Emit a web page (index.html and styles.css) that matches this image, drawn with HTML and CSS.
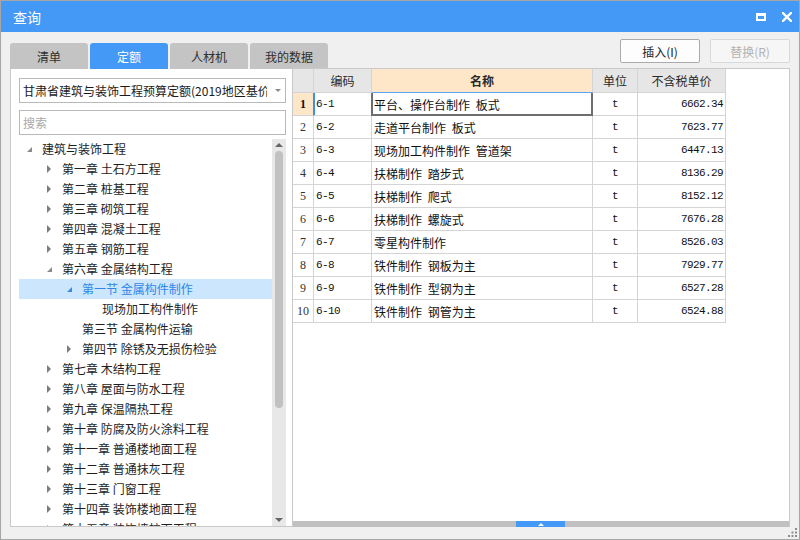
FILE: index.html
```html
<!DOCTYPE html>
<html lang="zh-CN">
<head>
<meta charset="utf-8">
<title>查询</title>
<link rel="stylesheet" href="styles.css">
</head>
<body>
<div class="window">
  <div class="titlebar">
    <span class="title">查询</span>
    <div class="win-ctrls">
      <svg class="ico" width="10" height="10" viewBox="0 0 10 10"><path d="M0 1h10v8H0z M2 4h6v3H2z" fill="#fff" fill-rule="evenodd"/></svg>
      <svg class="ico" width="10" height="10" viewBox="0 0 10 10"><path d="M1 1L9 9M9 1L1 9" stroke="#fff" stroke-width="2.3" stroke-linecap="square"/></svg>
    </div>
  </div>
  <div class="content">
    <div class="toprow">
      <div class="tabs">
        <div class="tab">清单</div>
        <div class="tab active">定额</div>
        <div class="tab">人材机</div>
        <div class="tab">我的数据</div>
      </div>
      <div class="actions">
        <button class="btn">插入(I)</button>
        <button class="btn disabled">替换(R)</button>
      </div>
    </div>
    <div class="main">
      <div class="left">
        <div class="select">
          <span class="select-text">甘肃省建筑与装饰工程预算定额(2019地区基价)</span>
          <span class="caret-box"><span class="caret"></span></span>
        </div>
        <div class="search">搜索</div>
        <div class="tree-wrap">
          <ul class="tree">
            <li class="node l0"><span class="tog open"></span><span class="label">建筑与装饰工程</span></li>
            <li class="node l1"><span class="tog closed"></span><span class="label">第一章 土石方工程</span></li>
            <li class="node l1"><span class="tog closed"></span><span class="label">第二章 桩基工程</span></li>
            <li class="node l1"><span class="tog closed"></span><span class="label">第三章 砌筑工程</span></li>
            <li class="node l1"><span class="tog closed"></span><span class="label">第四章 混凝土工程</span></li>
            <li class="node l1"><span class="tog closed"></span><span class="label">第五章 钢筋工程</span></li>
            <li class="node l1"><span class="tog open"></span><span class="label">第六章 金属结构工程</span></li>
            <li class="node l2 selected"><span class="tog open"></span><span class="label">第一节 金属构件制作</span></li>
            <li class="node l3"><span class="tog"></span><span class="label">现场加工构件制作</span></li>
            <li class="node l2"><span class="tog"></span><span class="label">第三节 金属构件运输</span></li>
            <li class="node l2"><span class="tog closed"></span><span class="label">第四节 除锈及无损伤检验</span></li>
            <li class="node l1"><span class="tog closed"></span><span class="label">第七章 木结构工程</span></li>
            <li class="node l1"><span class="tog closed"></span><span class="label">第八章 屋面与防水工程</span></li>
            <li class="node l1"><span class="tog closed"></span><span class="label">第九章 保温隔热工程</span></li>
            <li class="node l1"><span class="tog closed"></span><span class="label">第十章 防腐及防火涂料工程</span></li>
            <li class="node l1"><span class="tog closed"></span><span class="label">第十一章 普通楼地面工程</span></li>
            <li class="node l1"><span class="tog closed"></span><span class="label">第十二章 普通抹灰工程</span></li>
            <li class="node l1"><span class="tog closed"></span><span class="label">第十三章 门窗工程</span></li>
            <li class="node l1"><span class="tog closed"></span><span class="label">第十四章 装饰楼地面工程</span></li>
            <li class="node l1"><span class="tog closed"></span><span class="label">第十五章 装饰墙柱面工程</span></li>
          </ul>
          <div class="vscroll">
            <div class="arr-box"><span class="arr-up"></span></div>
            <div class="vthumb"></div>
            <div class="vspace"></div>
            <div class="arr-box"><span class="arr-down"></span></div>
          </div>
        </div>
      </div>
      <div class="gridpanel">
        <div class="grid-area">
          <div class="grow head">
            <div class="c num"></div>
            <div class="c">编码</div>
            <div class="c name-h">名称</div>
            <div class="c">单位</div>
            <div class="c">不含税单价</div>
          </div>
          <div class="grow cur">
            <div class="c num">1</div>
            <div class="c code">6-1</div>
            <div class="c name">平台、操作台制作 板式</div>
            <div class="c unit">t</div>
            <div class="c price">6662.34</div>
          </div>
          <div class="grow">
            <div class="c num">2</div>
            <div class="c code">6-2</div>
            <div class="c name">走道平台制作 板式</div>
            <div class="c unit">t</div>
            <div class="c price">7623.77</div>
          </div>
          <div class="grow">
            <div class="c num">3</div>
            <div class="c code">6-3</div>
            <div class="c name">现场加工构件制作 管道架</div>
            <div class="c unit">t</div>
            <div class="c price">6447.13</div>
          </div>
          <div class="grow">
            <div class="c num">4</div>
            <div class="c code">6-4</div>
            <div class="c name">扶梯制作 踏步式</div>
            <div class="c unit">t</div>
            <div class="c price">8136.29</div>
          </div>
          <div class="grow">
            <div class="c num">5</div>
            <div class="c code">6-5</div>
            <div class="c name">扶梯制作 爬式</div>
            <div class="c unit">t</div>
            <div class="c price">8152.12</div>
          </div>
          <div class="grow">
            <div class="c num">6</div>
            <div class="c code">6-6</div>
            <div class="c name">扶梯制作 螺旋式</div>
            <div class="c unit">t</div>
            <div class="c price">7676.28</div>
          </div>
          <div class="grow">
            <div class="c num">7</div>
            <div class="c code">6-7</div>
            <div class="c name">零星构件制作</div>
            <div class="c unit">t</div>
            <div class="c price">8526.03</div>
          </div>
          <div class="grow">
            <div class="c num">8</div>
            <div class="c code">6-8</div>
            <div class="c name">铁件制作 钢板为主</div>
            <div class="c unit">t</div>
            <div class="c price">7929.77</div>
          </div>
          <div class="grow">
            <div class="c num">9</div>
            <div class="c code">6-9</div>
            <div class="c name">铁件制作 型钢为主</div>
            <div class="c unit">t</div>
            <div class="c price">6527.28</div>
          </div>
          <div class="grow">
            <div class="c num">10</div>
            <div class="c code">6-10</div>
            <div class="c name">铁件制作 钢管为主</div>
            <div class="c unit">t</div>
            <div class="c price">6524.88</div>
          </div>
        </div>
        <div class="hscroll"><div class="hthumb"><span class="hthumb-arr"></span></div></div>
      </div>
    </div>
  </div>
  <svg class="grip" width="10" height="10" viewBox="0 0 10 10">
    <rect x="7" y="0" width="2" height="2" fill="#8e8e8e"/>
    <rect x="3.5" y="3.5" width="2" height="2" fill="#8e8e8e"/>
    <rect x="7" y="3.5" width="2" height="2" fill="#8e8e8e"/>
    <rect x="0" y="7" width="2" height="2" fill="#8e8e8e"/>
    <rect x="3.5" y="7" width="2" height="2" fill="#8e8e8e"/>
    <rect x="7" y="7" width="2" height="2" fill="#8e8e8e"/>
  </svg>
</div>
</body>
</html>
```

FILE: styles.css
```css
* { box-sizing: border-box; }
html, body { margin: 0; padding: 0; }
body {
  width: 800px;
  height: 540px;
  overflow: hidden;
  font-family: "Noto Sans CJK SC", "Liberation Sans", sans-serif;
  font-size: 12px;
  color: #1e1e1e;
}
.window {
  position: relative;
  width: 800px;
  height: 540px;
  border: 1px solid #a6a6a6;
  background: #f0f0f0;
  display: flex;
  flex-direction: column;
}
.titlebar {
  height: 31px;
  flex: none;
  background: #4499f6;
  color: #fff;
  display: flex;
  align-items: center;
  justify-content: space-between;
  padding-left: 12px;
}
.title { font-size: 14px; line-height: 1; }
.win-ctrls {
  display: flex;
  align-items: center;
  gap: 16px;
  padding-right: 7px;
}
.ico { display: block; }

.content {
  flex: 1;
  min-height: 0;
  display: flex;
  flex-direction: column;
  padding: 0 9px 12px 9px;
}
.toprow {
  height: 37px;
  flex: none;
  display: flex;
  justify-content: space-between;
}
.tabs {
  align-self: flex-end;
  display: flex;
  gap: 2px;
}
.tab {
  width: 78px;
  height: 26px;
  background: #c4c4c4;
  border-radius: 3px 3px 0 0;
  display: flex;
  align-items: center;
  justify-content: center;
  color: #2e2e2e;
  font-size: 12px;
}
.tab.active { background: #4499f6; color: #fff; }
.actions {
  margin-top: 7px;
  display: flex;
  gap: 10px;
}
.btn {
  width: 80px;
  height: 24px;
  padding: 0;
  background: #fdfdfd;
  border: 1px solid #ababab;
  border-radius: 2px;
  font-family: "Noto Sans CJK SC", "Liberation Sans", sans-serif;
  font-size: 12px;
  color: #222;
}
.btn.disabled {
  background: #f6f6f6;
  border-color: #d9d9d9;
  color: #b2b2b2;
}

.main {
  flex: 1;
  min-height: 0;
  display: flex;
}
.left {
  width: 282px;
  flex: none;
  background: #fff;
  border-left: 1px solid #c9c9c9;
  border-bottom: 1px solid #c9c9c9;
  padding: 9px 6px 0 8px;
  display: flex;
  flex-direction: column;
}
.select {
  height: 25px;
  flex: none;
  border: 1px solid #b9b9b9;
  background: #fff;
  display: flex;
  align-items: center;
  padding-left: 3px;
}
.select-text {
  flex: 1;
  min-width: 0;
  overflow: hidden;
  white-space: nowrap;
  color: #1a1a1a;
}
.caret-box {
  width: 18px;
  flex: none;
  display: flex;
  padding-left: 8px;
}
.caret {
  width: 0;
  height: 0;
  border-left: 3px solid transparent;
  border-right: 3px solid transparent;
  border-top: 3px solid #8a8a8a;
}
.search {
  height: 25px;
  flex: none;
  margin-top: 7px;
  border: 1px solid #b9b9b9;
  padding-left: 3px;
  display: flex;
  align-items: center;
  color: #a9a9a9;
}
.tree-wrap {
  flex: 1;
  min-height: 0;
  margin-top: 4px;
  display: flex;
  overflow: hidden;
}
.tree {
  flex: 1;
  min-width: 0;
  list-style: none;
  margin: 0;
  padding: 0;
}
.node {
  height: 20px;
  display: flex;
  align-items: center;
  white-space: nowrap;
  color: #1e1e1e;
}
.node.l1 { padding-left: 20px; }
.node.l2 { padding-left: 40px; }
.node.l3 { padding-left: 60px; }
.node.selected { background: #cce6fe; color: #2f86e6; }
.tog {
  width: 23px;
  flex: none;
  display: flex;
  align-items: center;
  padding-left: 8px;
  height: 20px;
}
.tog.closed::before {
  content: "";
  width: 0;
  height: 0;
  border-left: 4px solid #7c7c7c;
  border-top: 4px solid transparent;
  border-bottom: 4px solid transparent;
}
.tog.open::before {
  content: "";
  width: 0;
  height: 0;
  border-bottom: 5px solid #8a8a8a;
  border-left: 5px solid transparent;
  margin-top: 1px;
}
.node.selected .tog.open::before { border-bottom-color: #3a8be6; }
.label { line-height: 20px; }

.vscroll {
  width: 14px;
  flex: none;
  background: #e8e8e8;
  display: flex;
  flex-direction: column;
  align-items: center;
}
.arr-box {
  height: 12px;
  width: 14px;
  display: flex;
  align-items: center;
  justify-content: center;
  flex: none;
}
.arr-up {
  width: 0;
  height: 0;
  border-left: 4px solid transparent;
  border-right: 4px solid transparent;
  border-bottom: 4px solid #666;
}
.arr-down {
  width: 0;
  height: 0;
  border-left: 4px solid transparent;
  border-right: 4px solid transparent;
  border-top: 4px solid #666;
}
.vthumb {
  width: 8px;
  height: 257px;
  flex: none;
  border-radius: 4px;
  background: #c1c1c1;
}
.vspace { flex: 1; }

.gridpanel {
  flex: 1;
  min-width: 0;
  margin-top: -1px;
  background: #fff;
  border-top: 1px solid #c9c9c9;
  border-left: 1px solid #c9c9c9;
  border-right: 1px solid #c9c9c9;
  display: flex;
  flex-direction: column;
}
.grid-area {
  flex: 1;
  min-height: 0;
  overflow: hidden;
}
.grow {
  display: grid;
  grid-template-columns: 21px 58px 221px 45px 88px;
  height: 23px;
}
.grow.head { height: 24px; }
.c {
  border-right: 1px solid #d4d4d4;
  border-bottom: 1px solid #d4d4d4;
  white-space: nowrap;
  overflow: hidden;
  display: flex;
  align-items: center;
}
.head .c {
  background: #e6e6e6;
  justify-content: center;
  color: #2a2a2a;
  font-size: 12px;
}
.head .c.name-h {
  background: #fee7c8;
  font-weight: bold;
  border-bottom-color: #5ba4f5;
}
.c.num {
  justify-content: center;
  font-family: "Liberation Serif", serif;
  font-size: 12px;
  color: #333;
}
.cur .c.num {
  background: #fee7c8;
  font-weight: bold;
  color: #111;
  border-right-color: #3d8ff0;
}
.cur .c.code { box-shadow: inset 1px 0 0 #3d8ff0; }
.c.code, .c.unit, .c.price {
  font-family: "Liberation Mono", monospace;
  font-size: 11px;
  letter-spacing: -0.6px;
  color: #111;
}
.c.code { padding-left: 2px; }
.c.unit { justify-content: center; }
.c.price { justify-content: flex-end; padding-right: 2px; }
.c.name {
  padding-left: 2px;
  color: #111;
  word-spacing: 3px;
}
.cur .c.name { position: relative; overflow: visible; }
.cur .c.name::after {
  content: "";
  position: absolute;
  top: 0;
  bottom: -1px;
  left: -1px;
  right: -1px;
  border-left: 2px solid #6e6e6e;
  border-right: 2px solid #6e6e6e;
  border-bottom: 2px solid #6e6e6e;
}
.hscroll {
  height: 6px;
  flex: none;
  background: #c0c0c0;
  display: flex;
}
.hthumb {
  margin-left: 223px;
  width: 49px;
  height: 6px;
  background: #4499f6;
  display: flex;
  align-items: center;
  justify-content: center;
}
.hthumb-arr {
  width: 0;
  height: 0;
  border-left: 3px solid transparent;
  border-right: 3px solid transparent;
  border-bottom: 3px solid #fff;
}
.grip {
  position: absolute;
  right: 1px;
  bottom: 1px;
}
```
